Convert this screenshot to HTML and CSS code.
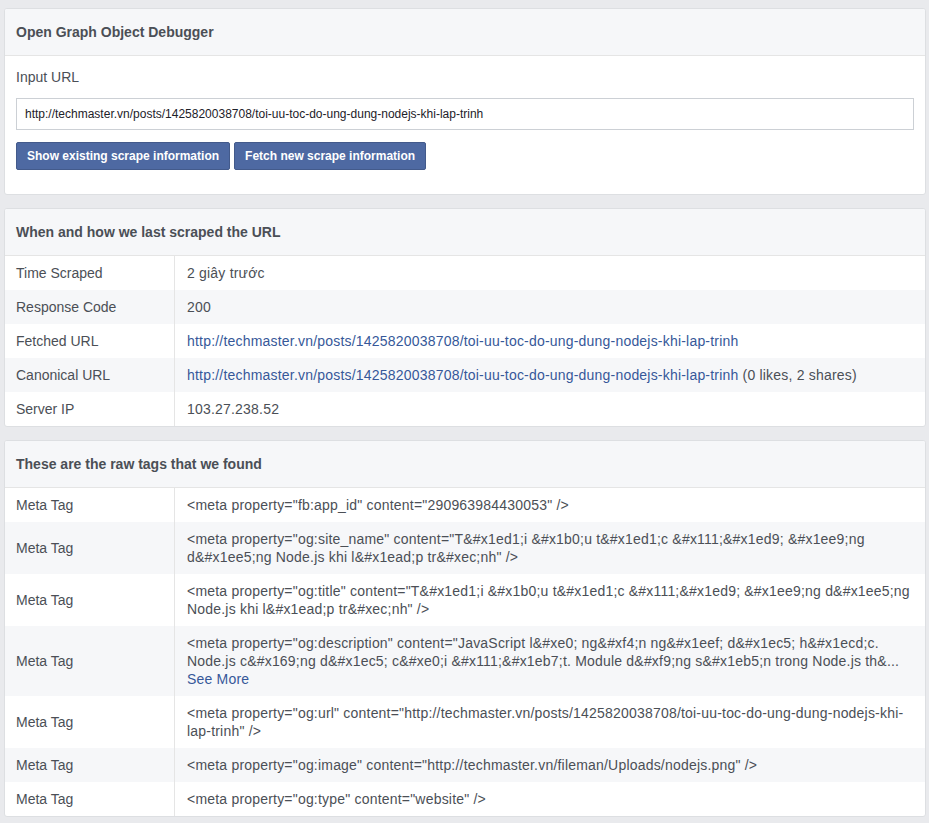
FILE: index.html
```html
<!DOCTYPE html>
<html>
<head>
<meta charset="utf-8">
<title>Open Graph Object Debugger</title>
<link rel="stylesheet" href="styles.css">
</head>
<body>
<div class="page">
  <section class="card">
    <div class="card-header">Open Graph Object Debugger</div>
    <div class="card-body">
      <div class="field-label">Input URL</div>
      <div class="url-input">http://techmaster.vn/posts/1425820038708/toi-uu-toc-do-ung-dung-nodejs-khi-lap-trinh</div>
      <div class="buttons">
        <button class="btn">Show existing scrape information</button>
        <button class="btn">Fetch new scrape information</button>
      </div>
    </div>
  </section>

  <section class="card">
    <div class="card-header">When and how we last scraped the URL</div>
    <div class="table">
      <div class="row"><div class="cell-label">Time Scraped</div><div class="cell-value">2 giây trước</div></div>
      <div class="row"><div class="cell-label">Response Code</div><div class="cell-value">200</div></div>
      <div class="row"><div class="cell-label">Fetched URL</div><div class="cell-value"><a class="link">http://techmaster.vn/posts/1425820038708/toi-uu-toc-do-ung-dung-nodejs-khi-lap-trinh</a></div></div>
      <div class="row"><div class="cell-label">Canonical URL</div><div class="cell-value"><a class="link">http://techmaster.vn/posts/1425820038708/toi-uu-toc-do-ung-dung-nodejs-khi-lap-trinh</a> (0 likes, 2 shares)</div></div>
      <div class="row"><div class="cell-label">Server IP</div><div class="cell-value">103.27.238.52</div></div>
    </div>
  </section>

  <section class="card">
    <div class="card-header">These are the raw tags that we found</div>
    <div class="table">
      <div class="row"><div class="cell-label">Meta Tag</div><div class="cell-value">&lt;meta property="fb:app_id" content="290963984430053" /&gt;</div></div>
      <div class="row"><div class="cell-label">Meta Tag</div><div class="cell-value">&lt;meta property="og:site_name" content="T&amp;#x1ed1;i &amp;#x1b0;u t&amp;#x1ed1;c &amp;#x111;&amp;#x1ed9; &amp;#x1ee9;ng d&amp;#x1ee5;ng Node.js khi l&amp;#x1ead;p tr&amp;#xec;nh" /&gt;</div></div>
      <div class="row"><div class="cell-label">Meta Tag</div><div class="cell-value">&lt;meta property="og:title" content="T&amp;#x1ed1;i &amp;#x1b0;u t&amp;#x1ed1;c &amp;#x111;&amp;#x1ed9; &amp;#x1ee9;ng d&amp;#x1ee5;ng Node.js khi l&amp;#x1ead;p tr&amp;#xec;nh" /&gt;</div></div>
      <div class="row"><div class="cell-label">Meta Tag</div><div class="cell-value">&lt;meta property="og:description" content="JavaScript l&amp;#xe0; ng&amp;#xf4;n ng&amp;#x1eef; d&amp;#x1ec5; h&amp;#x1ecd;c. Node.js c&amp;#x169;ng d&amp;#x1ec5; c&amp;#xe0;i &amp;#x111;&amp;#x1eb7;t. Module d&amp;#xf9;ng s&amp;#x1eb5;n trong Node.js th&amp;...<br><a class="link">See More</a></div></div>
      <div class="row"><div class="cell-label">Meta Tag</div><div class="cell-value">&lt;meta property="og:url" content="http://techmaster.vn/posts/1425820038708/toi-uu-toc-do-ung-dung-nodejs-khi-<span class="nowrap">lap-trinh"</span> /&gt;</div></div>
      <div class="row"><div class="cell-label">Meta Tag</div><div class="cell-value">&lt;meta property="og:image" content="http://techmaster.vn/fileman/Uploads/nodejs.png" /&gt;</div></div>
      <div class="row"><div class="cell-label">Meta Tag</div><div class="cell-value">&lt;meta property="og:type" content="website" /&gt;</div></div>
    </div>
  </section>
</div>
</body>
</html>
```

FILE: styles.css
```css
html, body {
  margin: 0;
  padding: 0;
  background: #e9eaed;
}
body {
  font-family: "Liberation Sans", Arial, Helvetica, sans-serif;
  font-size: 14px;
  line-height: 18px;
  color: #4b4f56;
}
.page {
  padding: 8px 3px 0 4px;
}
.card {
  background: #fff;
  border: 1px solid #dddfe2;
  border-radius: 3px;
  margin-bottom: 13px;
  overflow: hidden;
}
.card-header {
  background: #f6f7f9;
  border-bottom: 1px solid #e5e5e5;
  padding: 14px 11px;
  font-weight: bold;
  color: #4b4f56;
}
.card-body {
  padding: 12px 11px 24px;
}
.field-label {
  margin-bottom: 12px;
}
.url-input {
  height: 30px;
  border: 1px solid #ccd0d5;
  font-size: 12px;
  line-height: 30px;
  padding: 0 8px;
  color: #1d2129;
  background: #fff;
}
.buttons {
  display: flex;
  gap: 4px;
  margin-top: 12px;
}
.btn {
  height: 28px;
  padding: 0 10px;
  background: #4e69a2;
  border: 1px solid #435a8b;
  border-radius: 2px;
  color: #fff;
  font-family: "Liberation Sans", Arial, Helvetica, sans-serif;
  font-size: 12px;
  font-weight: bold;
  line-height: 26px;
}
.table {
  display: flex;
  flex-direction: column;
}
.row {
  display: grid;
  grid-template-columns: 170px 1fr;
}
.row:nth-child(even) {
  background: #f6f7f9;
}
.cell-label {
  padding: 8px 11px;
  border-right: 1px solid #e5e5e5;
  display: flex;
  align-items: center;
}
.cell-value {
  padding: 8px 12px 8px 12px;
  letter-spacing: 0.2px;
}
.nowrap {
  white-space: nowrap;
}
.link {
  color: #365899;
  text-decoration: none;
}
```
